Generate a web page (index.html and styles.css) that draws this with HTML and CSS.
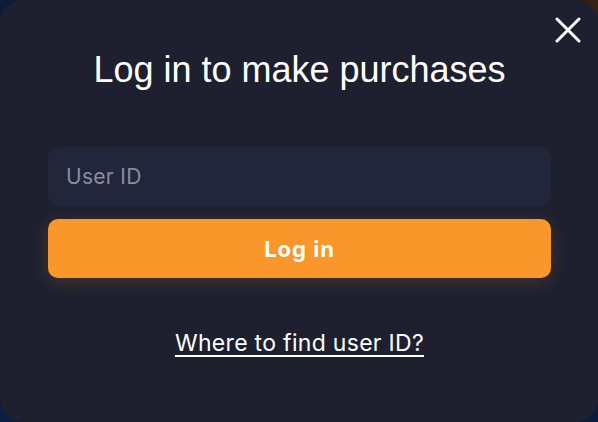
FILE: index.html
```html
<!DOCTYPE html>
<html lang="en">
<head>
<meta charset="utf-8">
<title>Log in</title>
<link rel="stylesheet" href="styles.css">
</head>
<body>
<div class="backdrop">
  <div class="modal">
    <button class="close" aria-label="Close">
      <svg width="26" height="26" viewBox="0 0 26 26"><path d="M2 2 L24 24 M24 2 L2 24" stroke="#fff" stroke-width="3" stroke-linecap="round"/></svg>
    </button>
    <h1 class="title">Log in to make purchases</h1>
    <form class="form">
      <input class="field" type="text" placeholder="User ID">
      <button class="submit" type="button">Log in</button>
    </form>
    <a class="help" href="#">Where to find user ID?</a>
  </div>
</div>
</body>
</html>
```
FILE: styles.css
```css
* { box-sizing: border-box; }
html, body { margin: 0; padding: 0; }
body {
  width: 598px;
  height: 422px;
  overflow: hidden;
  background: linear-gradient(to top right, #0b1d46 0%, #0d1b3a 65%, #3a2010 100%);
}
.backdrop { width: 598px; height: 422px; }
.modal {
  position: relative;
  width: 598px;
  height: 422px;
  background: #1e2030;
  border-radius: 22px;
  padding: 48px 47px 0 48px;
  display: flex;
  flex-direction: column;
  align-items: stretch;
}
.close {
  position: absolute;
  top: 17px;
  right: 17px;
  width: 26px;
  height: 26px;
  padding: 0;
  border: 0;
  background: none;
  cursor: pointer;
}
.close svg { display: block; }
.title {
  margin: 0;
  text-align: center;
  font-family: "Liberation Sans", Arial, sans-serif;
  font-weight: 400;
  font-size: 36px;
  line-height: 44px;
  color: #fff;
}
.form {
  margin-top: 55px;
  display: flex;
  flex-direction: column;
  gap: 13px;
}
.field {
  height: 59px;
  border: 0;
  border-radius: 10px;
  background: #22263b;
  padding: 0 18px;
  font-family: Inter, "Noto Sans", sans-serif;
  font-size: 21px;
  letter-spacing: 0.3px;
  color: #fff;
  outline: none;
}
.field::placeholder { color: #878da0; }
.submit {
  height: 59px;
  border: 0;
  border-radius: 10px;
  background: #fa972a;
  color: #fff;
  font-family: Inter, "Noto Sans", sans-serif;
  font-weight: 700;
  font-size: 22px;
  letter-spacing: 1px;
  box-shadow: 0 4px 18px rgba(250, 151, 42, 0.18);
  cursor: pointer;
}
.help {
  align-self: center;
  margin-top: 51px;
  font-family: Inter, "Noto Sans", sans-serif;
  font-size: 23px;
  letter-spacing: 0.3px;
  line-height: 28px;
  color: #fff;
  text-decoration: underline;
  text-underline-offset: 4px;
  text-decoration-thickness: 2px;
}
```
